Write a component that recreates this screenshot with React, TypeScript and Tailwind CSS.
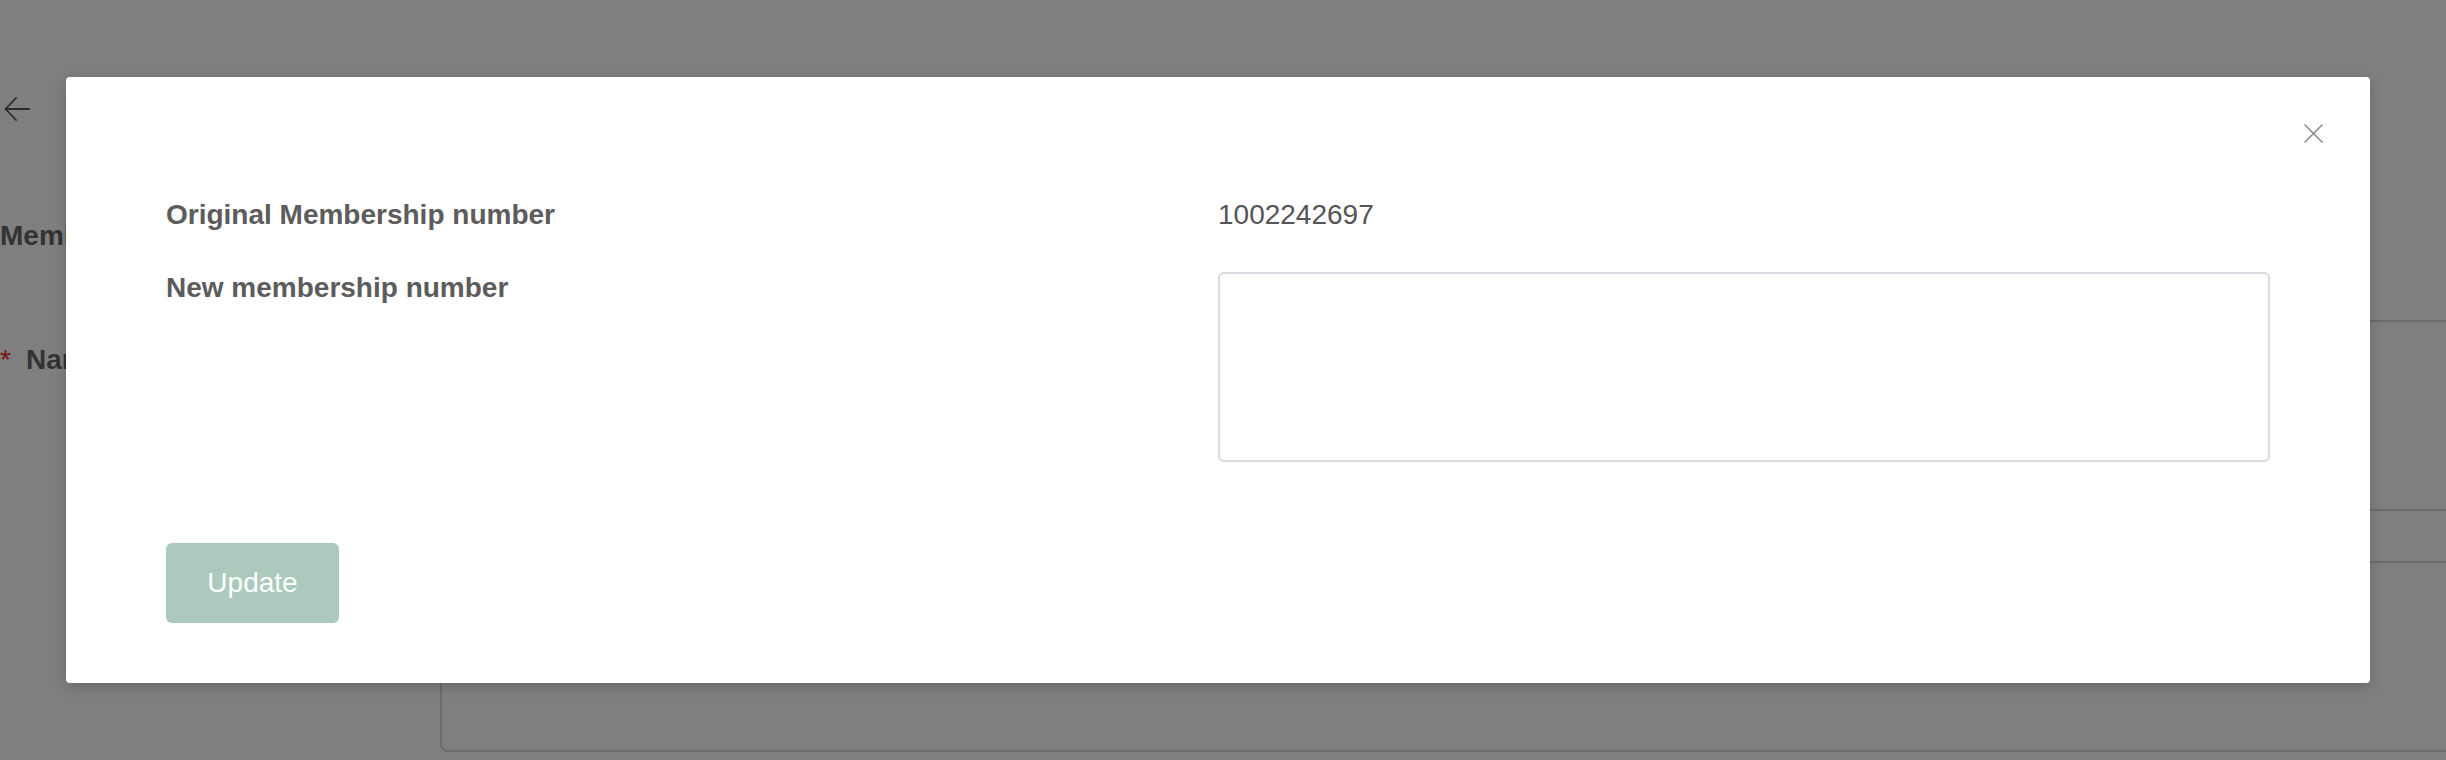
import React, { useState } from 'react';

function CloseIcon() {
  return (
    <svg width="19" height="19" viewBox="0 0 19 19" fill="none">
      <path d="M1 1L18 18M18 1L1 18" stroke="#8a8a8a" strokeWidth="1.6" strokeLinecap="round" />
    </svg>
  );
}

function BackArrow() {
  return (
    <svg width="26" height="24" viewBox="0 0 26 24" fill="none">
      <path d="M25 12H2M12 1L1.5 12L12 23" stroke="#555555" strokeWidth="1.8" strokeLinecap="round" strokeLinejoin="round" />
    </svg>
  );
}

function BackgroundPage() {
  return (
    <div className="flex flex-col pt-[97px] text-[28px] leading-[42px] font-bold text-[#666666]">
      <div className="pl-[4px] h-[24px]">
        <BackArrow />
      </div>
      <h2 className="mt-[94px] whitespace-nowrap">Membership</h2>
      <div className="mt-[63px] flex">
        <div className="w-[440px] shrink-0 pt-[19px] whitespace-nowrap">
          <span className="text-[#f5222d] font-normal mr-[15px]">*</span>Name
        </div>
        <div className="w-[2100px] shrink-0 h-[191px] border-2 border-[#d2d6dd] rounded-[8px]" />
      </div>
      <div className="mt-[50px] flex">
        <div className="w-[440px] shrink-0" />
        <div className="w-[2100px] shrink-0 h-[191px] border-2 border-[#d2d6dd] rounded-[8px]" />
      </div>
    </div>
  );
}

function ChangeNumberModal() {
  const [value, setValue] = useState('');

  return (
    <div className="absolute left-[66px] top-[77px] w-[2304px] bg-white rounded-[4px] shadow-[0_4px_14px_rgba(0,0,0,0.18)] px-[100px] pt-[117px] pb-[60px]">
      <button className="absolute top-[47px] right-[47px] w-[19px] h-[19px] flex items-center justify-center">
        <CloseIcon />
      </button>

      <div className="grid grid-cols-2 text-[28px] leading-[42px]">
        <div className="font-bold text-[#5c5c5c]">Original Membership number</div>
        <div className="text-[#555555]">1002242697</div>
      </div>

      <div className="grid grid-cols-2 mt-[31px] text-[28px] leading-[42px]">
        <div className="font-bold text-[#5c5c5c]">New membership number</div>
        <div className="pt-[5px]">
          <textarea
            value={value}
            onChange={e => setValue(e.target.value)}
            className="block w-full h-[190px] border-2 border-[#d6dae3] rounded-[6px] resize-none outline-none px-3 py-2 text-[#555555]"
          />
        </div>
      </div>

      <button
        disabled={!value}
        className="mt-[81px] w-[173px] h-[80px] rounded-[6px] bg-[#abcabd] text-white text-[28px] leading-none"
      >
        Update
      </button>
    </div>
  );
}

export default function App() {
  return (
    <div className="relative w-full h-[760px] overflow-hidden bg-white font-['Liberation_Sans',Arial,sans-serif]">
      <BackgroundPage />
      <div className="absolute inset-0 bg-black/50" />
      <ChangeNumberModal />
    </div>
  );
}
